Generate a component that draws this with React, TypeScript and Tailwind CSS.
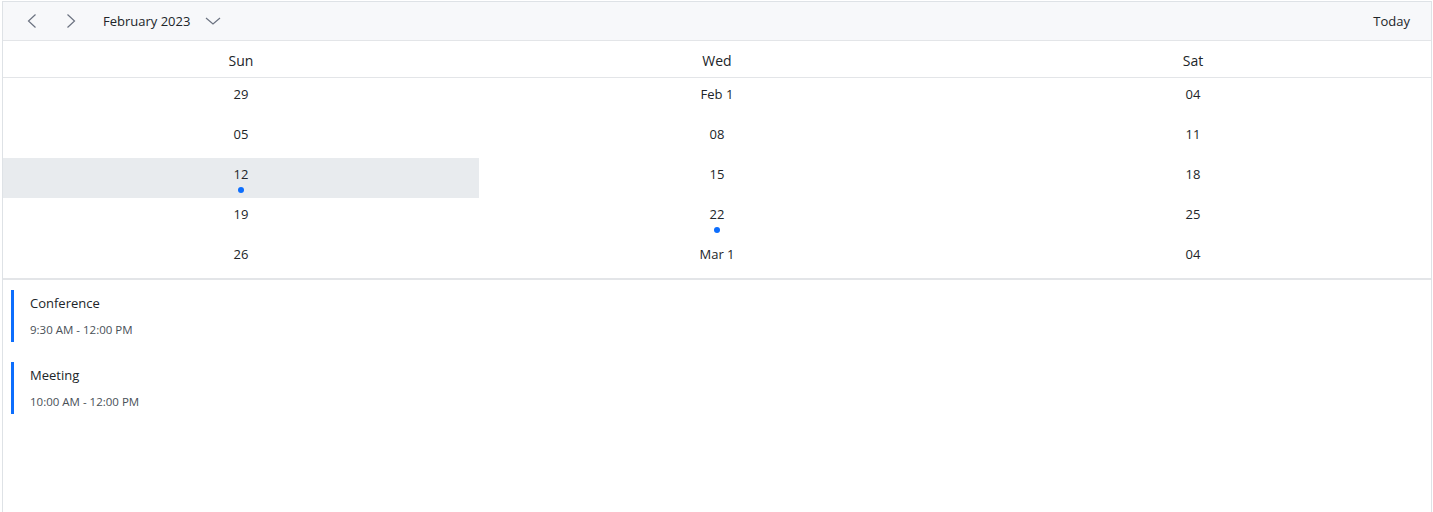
import React from 'react';

type Cell = { label: string; dot?: boolean; selected?: boolean };

const rows: Cell[][] = [
    [{ label: '29' }, { label: 'Feb 1' }, { label: '04' }],
    [{ label: '05' }, { label: '08' }, { label: '11' }],
    [{ label: '12', dot: true, selected: true }, { label: '15' }, { label: '18' }],
    [{ label: '19' }, { label: '22', dot: true }, { label: '25' }],
    [{ label: '26' }, { label: 'Mar 1' }, { label: '04' }],
];

const events = [
    { title: 'Conference', time: '9:30 AM - 12:00 PM' },
    { title: 'Meeting', time: '10:00 AM - 12:00 PM' },
];

function Chevron({ dir }: { dir: 'left' | 'right' | 'down' }) {
    if (dir === 'down') {
        return (
            <svg width="16" height="8" viewBox="0 0 16 8" fill="none" stroke="#6b7280" strokeWidth="1.2">
                <path d="M1 1 L8 7 L15 1" />
            </svg>
        );
    }
    return (
        <svg width="10" height="14" viewBox="0 0 10 14" fill="none" stroke="#6b7280" strokeWidth="1.2">
            {dir === 'left' ? <path d="M8.5 0.5 L1.5 7 L8.5 13.5" /> : <path d="M1.5 0.5 L8.5 7 L1.5 13.5" />}
        </svg>
    );
}

export default function App() {
    return (
        <div className="pt-[1px] pl-[2px] w-[1432px] h-[512px] bg-white" style={{ fontFamily: '"Open Sans", "Noto Sans", sans-serif' }}>
            <div className="h-[511px] border-x border-t border-[#dee2e6] flex flex-col">
                {/* Header */}
                <div className="h-[39px] bg-[#f7f8fa] border-b border-[#e3e5e8] flex items-center pl-[24px] pr-[21px] text-[13px] text-[#212529]">
                    <Chevron dir="left" />
                    <div className="w-[29px]" />
                    <Chevron dir="right" />
                    <span className="ml-[27px] pt-[2px]">February 2023</span>
                    <span className="ml-[15px] flex items-center"><Chevron dir="down" /></span>
                    <span className="ml-auto pt-[2px]">Today</span>
                </div>

                {/* Week day header */}
                <div className="grid grid-cols-3 h-[37px] border-b border-[#e3e5e8] text-[14px] text-[#212529]">
                    {['Sun', 'Wed', 'Sat'].map(d => (
                        <div key={d} className="flex items-center justify-center pt-[2px]">{d}</div>
                    ))}
                </div>

                {/* Date rows */}
                <div className="flex flex-col border-b-2 border-[#e3e5e8]">
                    {rows.map((r, i) => (
                        <div key={i} className="grid grid-cols-3 h-[40px]">
                            {r.map((c, j) => (
                                <div key={j} className={`flex flex-col items-center pt-[7px] text-[13px] text-[#212529] ${c.selected ? 'bg-[#e8ebee]' : ''}`}>
                                    <span className="leading-[18px]">{c.label}</span>
                                    {c.dot && <span className="mt-[4px] w-[6px] h-[6px] rounded-full bg-[#0d6efd]" />}
                                </div>
                            ))}
                        </div>
                    ))}
                </div>

                {/* Events */}
                <div className="flex flex-col gap-[20px] pt-[10px] pl-[8px]">
                    {events.map(e => (
                        <div key={e.title} className="h-[52px] border-l-[3px] border-[#0d6efd] pl-[16px] flex flex-col">
                            <span className="text-[13px] text-[#212529] leading-[18px] mt-[4px]">{e.title}</span>
                            <span className="text-[11.5px] text-[#495057] leading-[16px] mt-[10px]">{e.time}</span>
                        </div>
                    ))}
                </div>
            </div>
        </div>
    );
}
